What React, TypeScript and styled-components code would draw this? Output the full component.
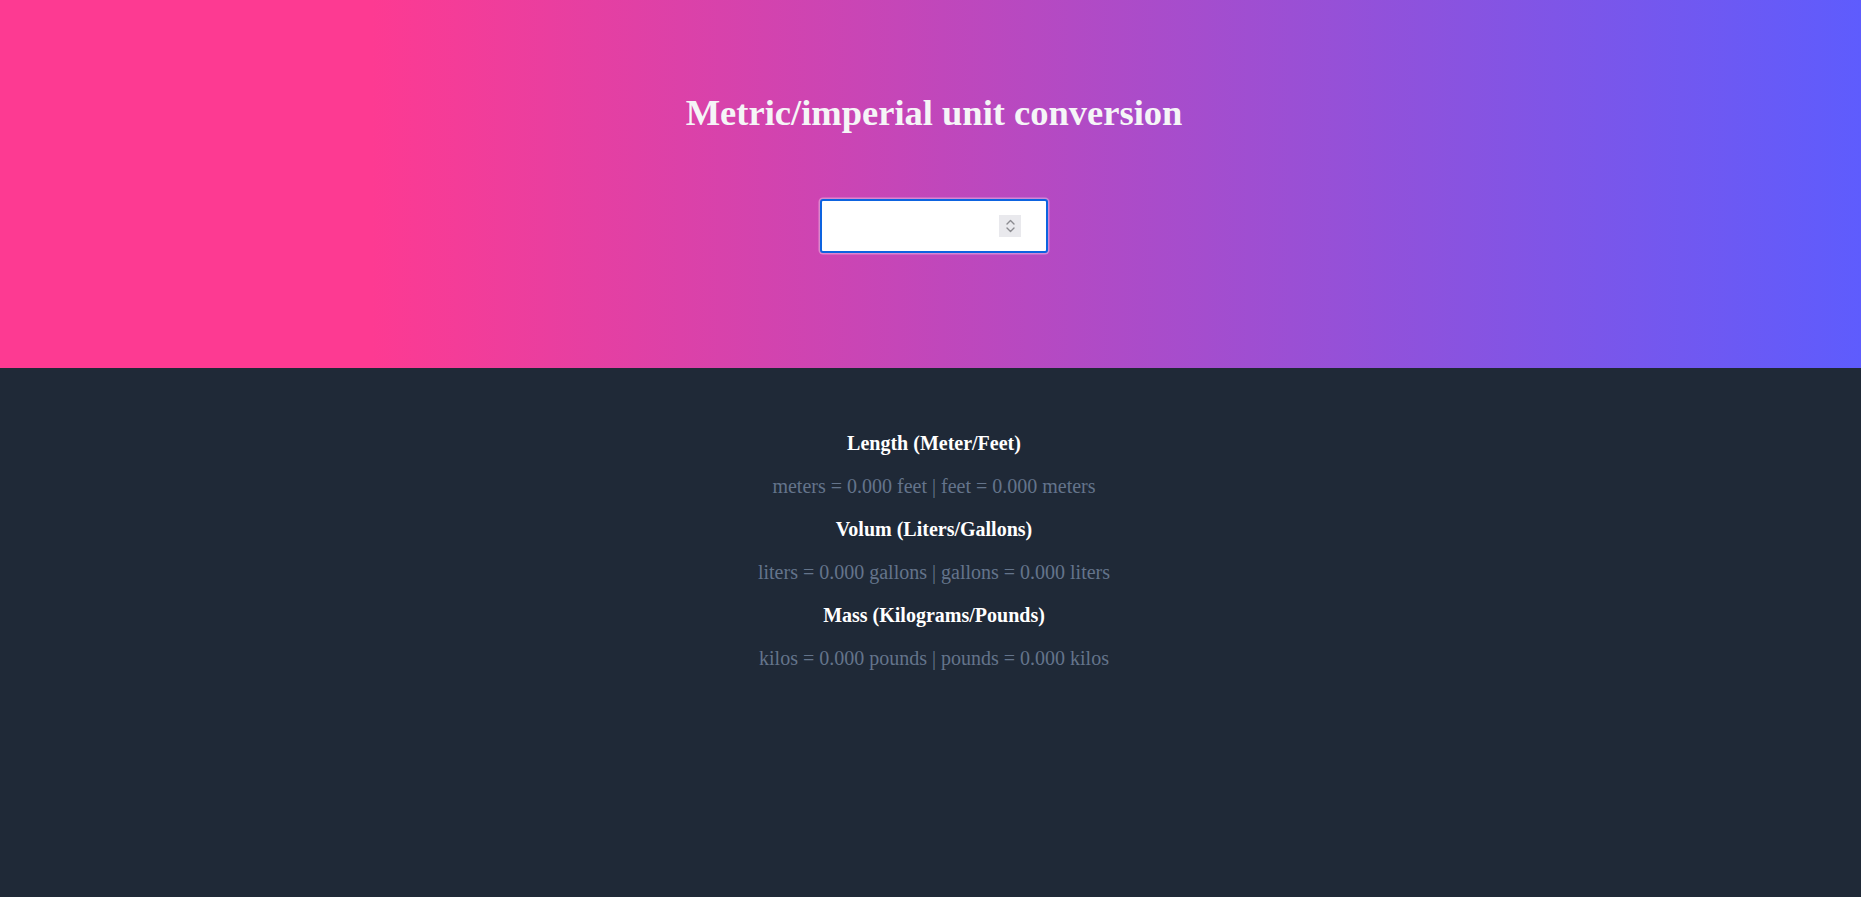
import styled, { createGlobalStyle } from 'styled-components';

const GlobalStyle = createGlobalStyle`
    html, body {
        margin: 0;
        padding: 0;
        background: #1f2937;
        font-family: 'Liberation Serif', 'Times New Roman', serif;
    }
`;

const Page = styled.div`
    min-height: 100vh;
    background: #1f2937;
`;

const Header = styled.header`
    display: flex;
    flex-direction: column;
    align-items: center;
    height: 368px;
    box-sizing: border-box;
    padding: 92px 0 0 7px;
    background: linear-gradient(to right, #fd3a92 20%, #5e5cfd 100%);
`;

const Title = styled.h1`
    margin: 0 0 66px;
    color: #f5f5f7;
    font-size: 36.5px;
    line-height: 41px;
    font-weight: 700;
`;

const InputWrap = styled.div`
    position: relative;
    width: 228px;
    height: 54px;
`;

const NumberInput = styled.input`
    box-sizing: border-box;
    width: 100%;
    height: 100%;
    padding: 0 24px;
    border: 2px solid #0d63e0;
    border-radius: 3px;
    background: #fff;
    font-family: 'Liberation Serif', serif;
    font-size: 20px;
    outline: none;
    box-shadow: 0 0 0 1.5px rgba(255, 255, 255, 0.35);
    appearance: textfield;
    -moz-appearance: textfield;

    &::-webkit-inner-spin-button,
    &::-webkit-outer-spin-button {
        -webkit-appearance: none;
        margin: 0;
    }
`;

// the native spinner only shows on hover, so it is drawn over the field
const Spinner = styled.span`
    position: absolute;
    top: 16px;
    right: 27px;
    width: 22px;
    height: 22px;
    display: flex;
    align-items: center;
    justify-content: center;
    background: #e9e9ed;
    pointer-events: none;
`;

const Results = styled.section`
    padding: 44px 0 0 7px;
    text-align: center;
`;

const Label = styled.h3`
    margin: 20px 0;
    color: #ffffff;
    font-size: 20px;
    line-height: 23px;
    font-weight: 700;
`;

const Line = styled.p`
    margin: 20px 0;
    color: #64748b;
    font-size: 20px;
    line-height: 23px;
`;

const rows = [
    { label: 'Length (Meter/Feet)', text: 'meters = 0.000 feet | feet = 0.000 meters' },
    { label: 'Volum (Liters/Gallons)', text: 'liters = 0.000 gallons | gallons = 0.000 liters' },
    { label: 'Mass (Kilograms/Pounds)', text: 'kilos = 0.000 pounds | pounds = 0.000 kilos' },
];

const App = () => {
    return (
        <Page>
            <GlobalStyle />
            <Header>
                <Title>Metric/imperial unit conversion</Title>
                <InputWrap>
                    <NumberInput type="number" />
                    <Spinner>
                        <svg width="11" height="16" viewBox="0 0 11 16" fill="none" stroke="#8b8b90" strokeWidth="1.4" strokeLinecap="round" strokeLinejoin="round">
                            <path d="M2 6 L5.5 2.5 L9 6" />
                            <path d="M2 10 L5.5 13.5 L9 10" />
                        </svg>
                    </Spinner>
                </InputWrap>
            </Header>
            <Results>
                {rows.map((r) => (
                    <div key={r.label}>
                        <Label>{r.label}</Label>
                        <Line>{r.text}</Line>
                    </div>
                ))}
            </Results>
        </Page>
    );
};

export default App;
